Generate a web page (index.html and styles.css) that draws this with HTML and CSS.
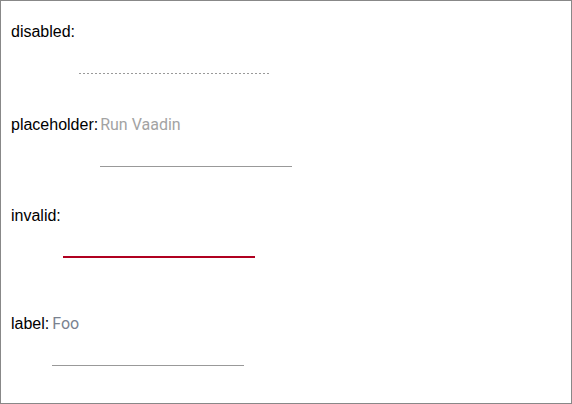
FILE: index.html
```html
<!DOCTYPE html>
<html>
<head>
<meta charset="utf-8">
<link rel="stylesheet" href="styles.css">
</head>
<body>
<div class="page">
  <div class="row row-disabled">
    <span class="label">disabled:</span>
    <span class="field field-disabled"><span class="value">&nbsp;</span></span>
  </div>
  <div class="row row-placeholder">
    <span class="label">placeholder:</span>
    <span class="field"><span class="value placeholder">Run Vaadin</span></span>
  </div>
  <div class="row row-invalid">
    <span class="label">invalid:</span>
    <span class="field field-invalid"><span class="value">&nbsp;</span></span>
  </div>
  <div class="row row-label">
    <span class="label">label:</span>
    <span class="field field-labelled"><span class="value floating">Foo</span></span>
  </div>
</div>
</body>
</html>
```

FILE: styles.css
```css
html, body {
  margin: 0;
  padding: 0;
  background: #fff;
}

.page {
  box-sizing: border-box;
  width: 572px;
  height: 404px;
  border: 1px solid #888;
  padding: 21px 9px 0 10px;
  font-family: "Liberation Sans", Arial, sans-serif;
  font-size: 16px;
  color: #000;
}

.row {
  display: flex;
  align-items: baseline;
  gap: 2px;
}

.label {
  line-height: 18px;
}

.field {
  display: block;
  width: 192px;
  padding-bottom: 31px;
  border-bottom: 1px solid #999;
  font-family: Roboto, "Liberation Sans", sans-serif;
  line-height: 20px;
}

.field-disabled {
  border-bottom: none;
  padding-bottom: 32px;
  margin-left: 2px;
  width: 190px;
  background: repeating-linear-gradient(to right, #999 0 2px, transparent 2px 4px) left bottom / 100% 1px no-repeat;
}

.field-invalid {
  border-bottom: 2px solid #b00020;
  padding-bottom: 30px;
}

.field-labelled {
  margin-left: 1px;
}

.placeholder {
  color: #a3a3a3;
}

.floating {
  color: #7a8290;
}

.row-placeholder {
  margin-top: 41px;
}

.row-invalid {
  margin-top: 39px;
}

.row-label {
  margin-top: 56px;
}
```
